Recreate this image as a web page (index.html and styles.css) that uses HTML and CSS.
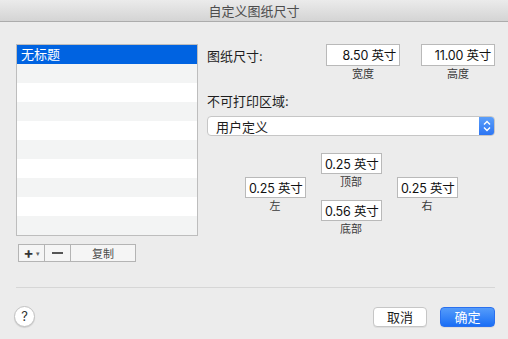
FILE: index.html
```html
<!DOCTYPE html>
<html lang="zh-CN">
<head>
    <meta charset="UTF-8">
    <title>自定义图纸尺寸</title>
    <link rel="stylesheet" href="styles.css">
</head>
<body>
    <div class="window">
        <div class="titlebar">自定义图纸尺寸</div>

        <div class="content">
            <div class="main">
                <div class="sidebar">
                    <ul class="list">
                        <li class="selected">无标题</li>
                        <li></li>
                        <li></li>
                        <li></li>
                        <li></li>
                        <li></li>
                        <li></li>
                        <li></li>
                        <li></li>
                        <li></li>
                    </ul>
                    <div class="seg">
                        <span class="seg-btn seg-add"><b>+</b><i>▾</i></span>
                        <span class="seg-btn seg-remove"><span class="dash"></span></span>
                        <span class="seg-btn seg-copy">复制</span>
                    </div>
                </div>

                <div class="settings">
                    <div class="size-row">
                        <span class="label">图纸尺寸:</span>
                        <div class="field">
                            <div class="box">8.50 英寸</div>
                            <div class="caption">宽度</div>
                        </div>
                        <div class="field">
                            <div class="box">11.00 英寸</div>
                            <div class="caption">高度</div>
                        </div>
                    </div>

                    <div class="label area-label">不可打印区域:</div>
                    <div class="popup">
                        <span>用户定义</span>
                        <span class="stepper">
                            <svg width="16" height="20" viewBox="0 0 16 20">
                                <path d="M5 8.5 L8 5.5 L11 8.5" fill="none" stroke="#fff" stroke-width="1.4"/>
                                <path d="M5 11.5 L8 14.5 L11 11.5" fill="none" stroke="#fff" stroke-width="1.4"/>
                            </svg>
                        </span>
                    </div>

                    <div class="margins">
                        <div class="field small">
                            <div class="box">0.25 英寸</div>
                            <div class="caption">左</div>
                        </div>
                        <div class="middle">
                            <div class="field small">
                                <div class="box">0.25 英寸</div>
                                <div class="caption">顶部</div>
                            </div>
                            <div class="field small">
                                <div class="box">0.56 英寸</div>
                                <div class="caption">底部</div>
                            </div>
                        </div>
                        <div class="field small">
                            <div class="box">0.25 英寸</div>
                            <div class="caption">右</div>
                        </div>
                    </div>
                </div>
            </div>

            <div class="separator"></div>

            <div class="footer">
                <span class="help">?</span>
                <span class="spacer"></span>
                <span class="button">取消</span>
                <span class="button primary">确定</span>
            </div>
        </div>
    </div>
</body>
</html>
```

FILE: styles.css
```css
/* Window */
body {
    margin: 0;
    padding: 0;
    background-color: #ececec;
    font-family: Inter, "Noto Sans CJK SC", sans-serif;
    font-size: 13px;
    color: #1e1e1e;
}

.window {
    width: 508px;
    height: 339px;
    background-color: #ececec;
    overflow: hidden;
}

.titlebar {
    height: 21px;
    line-height: 22px;
    text-align: center;
    color: #4d4d4d;
    background: linear-gradient(180deg, #ebebeb 0%, #d4d4d4 100%);
    border-bottom: 1px solid #acacac;
}

.content {
    padding: 22px 13px 0 16px;
}

.main {
    display: flex;
    gap: 9px;
}

/* List on the left */
.sidebar {
    width: 182px;
}

.list {
    list-style: none;
    margin: 0;
    padding: 0;
    border: 1px solid #bdbdbd;
    background-color: #fff;
}

.list li {
    height: 19px;
    line-height: 19px;
    padding-left: 4px;
}

.list li:nth-child(even) {
    background-color: #f3f4f4;
}

.list li.selected {
    background-color: #0063e1;
    color: #fff;
}

.seg {
    display: flex;
    margin: 8px 0 0 2px;
    width: 118px;
    height: 18px;
    border: 1px solid #b4b4b4;
    box-sizing: border-box;
    background-color: #f5f5f5;
}

.seg-btn {
    display: flex;
    align-items: center;
    justify-content: center;
    color: #4a4a4a;
    border-right: 1px solid #b4b4b4;
}

.seg-add {
    width: 25px;
    gap: 2px;
}

.seg-add b {
    font-size: 15px;
    line-height: 16px;
    color: #333;
}

.seg-add i {
    font-style: normal;
    font-size: 7px;
    color: #666;
}

.seg-remove {
    width: 25px;
}

.dash {
    width: 11px;
    height: 2px;
    background-color: #555;
}

.seg-copy {
    flex: 1;
    border-right: none;
    font-size: 11px;
}

/* Settings on the right */
.settings {
    width: 288px;
}

.label {
    line-height: 16px;
}

.size-row {
    display: flex;
    align-items: flex-start;
    gap: 21px;
}

.size-row .label {
    flex: 1;
    margin-top: 4px;
}

.field {
    width: 74px;
    display: flex;
    flex-direction: column;
}

.box {
    height: 22px;
    line-height: 22px;
    box-sizing: border-box;
    background-color: #fff;
    border: 1px solid #b9b9b9;
    text-align: right;
    padding-right: 3px;
    color: #111;
    font-size: 12.5px;
    letter-spacing: -0.2px;
    white-space: nowrap;
    overflow: hidden;
}

.caption {
    height: 14px;
    line-height: 14px;
    margin-top: 1px;
    font-size: 11px;
    color: #3a3a3a;
    text-align: center;
}

.area-label {
    margin-top: 12px;
}

.popup {
    display: flex;
    align-items: center;
    justify-content: space-between;
    margin-top: 7px;
    height: 20px;
    box-sizing: border-box;
    padding-left: 8px;
    background-color: #fff;
    border: 1px solid #c6c6c6;
    border-radius: 4px;
    overflow: hidden;
}

.stepper {
    display: flex;
    width: 16px;
    height: 20px;
    margin-right: -1px;
    background: linear-gradient(180deg, #5ea1fa 0%, #2a73f3 100%);
}

.margins {
    display: flex;
    align-items: center;
    justify-content: center;
    gap: 15px;
    margin-top: 17px;
}

.field.small {
    width: 61px;
}

.field.small .box {
    height: 21px;
    line-height: 21px;
    padding-right: 2px;
}

.middle {
    display: flex;
    flex-direction: column;
    gap: 11px;
}

/* Bottom */
.separator {
    margin-top: 25px;
    height: 1px;
    background-color: #d6d6d6;
}

.footer {
    display: flex;
    align-items: center;
    gap: 13px;
    margin-top: 18px;
    height: 21px;
}

.help {
    width: 21px;
    height: 21px;
    margin-left: -2px;
    box-sizing: border-box;
    border: 1px solid #c2c2c2;
    border-radius: 50%;
    background-color: #fff;
    box-shadow: 0 1px 1px rgba(0, 0, 0, 0.12);
    text-align: center;
    line-height: 19px;
    color: #333;
}

.spacer {
    flex: 1;
}

.button {
    width: 54px;
    height: 20px;
    line-height: 18px;
    box-sizing: border-box;
    text-align: center;
    background-color: #fff;
    border: 1px solid #c6c6c6;
    border-radius: 4px;
    box-shadow: 0 1px 0 rgba(0, 0, 0, 0.06);
}

.button.primary {
    width: 55px;
    color: #fff;
    border-color: #2a70ee;
    background: linear-gradient(180deg, #559cfa 0%, #1a6ef5 100%);
}
```
